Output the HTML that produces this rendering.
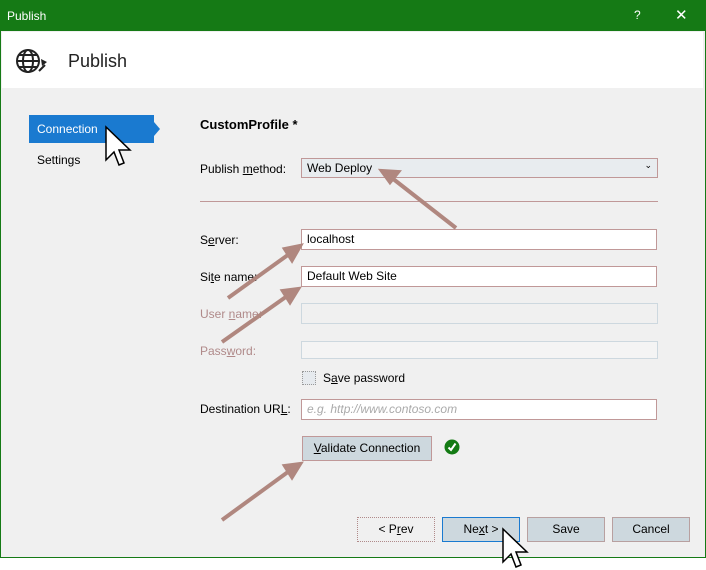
<!DOCTYPE html><html><head><style>
body{margin:0;width:706px;height:570px;background:#fff;font-family:"Liberation Sans",sans-serif;font-size:12px;color:#000;position:relative;overflow:hidden}
.a{position:absolute}
.inp{position:absolute;height:19px;border:1px solid #c09898;background:#fff;box-sizing:border-box;padding:2px 5px;font-size:12px}
.btn{position:absolute;height:25px;box-sizing:border-box;text-align:center;line-height:23px;font-size:12px}
</style></head><body>
<div class="a" style="left:0;top:0;width:706px;height:558px;background:#f0f0f0;border:1px solid #157a15;box-sizing:border-box"></div>
<div class="a" style="left:0;top:0;width:706px;height:31px;background:#157a15;color:#fff;font-size:12px"><span class="a" style="left:7px;top:9px">Publish</span><span class="a" style="left:634px;top:8px">?</span><span class="a" style="left:675px;top:6px;font-size:15px;font-weight:lighter">✕</span></div>
<div class="a" style="left:2px;top:32px;width:701px;height:56px;background:#fff"></div>
<svg class="a" style="left:14px;top:45px" width="34" height="32" viewBox="0 0 34 32"><g fill="none" stroke="#222" stroke-width="2"><circle cx="14" cy="16" r="11"/><ellipse cx="14" cy="16" rx="5" ry="11"/><line x1="3" y1="16" x2="25" y2="16"/><line x1="5" y1="10" x2="23" y2="10"/><line x1="5" y1="22" x2="23" y2="22"/><path d="M25 26 L31 20" /></g><path d="M27 14 L33 17 L28 21Z" fill="#222"/></svg>
<div class="a" style="left:68px;top:51px;font-size:18px;color:#222">Publish</div>
<div class="a" style="left:29px;top:115px;width:125px;height:28px;background:#1a7ad0;color:#fff"><span class="a" style="left:8px;top:7px">Connection</span></div>
<div class="a" style="left:154px;top:122px;width:0;height:0;border-top:7px solid transparent;border-bottom:7px solid transparent;border-left:6px solid #1a7ad0"></div>
<div class="a" style="left:37px;top:153px">Settings</div>
<div class="a" style="left:200px;top:117px;font-weight:bold;font-size:13px">CustomProfile *</div>
<div class="a" style="left:200px;top:162px">Publish <u>m</u>ethod:</div>
<div class="inp" style="left:301px;top:158px;width:357px;height:20px;background:#e8ecef">Web Deploy<span style="position:absolute;right:5px;top:1px;font-size:9px">⌄</span></div>
<div class="a" style="left:200px;top:201px;width:458px;height:1px;background:#c09898"></div>
<div class="a" style="left:200px;top:233px">S<u>e</u>rver:</div>
<div class="inp" style="left:301px;top:229px;width:356px;height:21px">localhost</div>
<div class="a" style="left:200px;top:270px">Si<u>t</u>e name:</div>
<div class="inp" style="left:301px;top:266px;width:356px;height:21px">Default Web Site</div>
<div class="a" style="left:200px;top:307px;color:#b08a8a">User <u>n</u>ame:</div>
<div class="inp" style="left:301px;top:303px;width:357px;height:21px;border-color:#cdd8df;background:#f0f0f0"></div>
<div class="a" style="left:200px;top:344px;color:#b08a8a">Pass<u>w</u>ord:</div>
<div class="inp" style="left:301px;top:341px;width:357px;height:18px;border-color:#cdd8df;background:#f4f4f4"></div>
<div class="a" style="left:302px;top:371px;width:12px;height:12px;border:1px dotted #999;background:#e6eaee"></div>
<div class="a" style="left:323px;top:371px">S<u>a</u>ve password</div>
<div class="a" style="left:200px;top:402px">Destination UR<u>L</u>:</div>
<div class="inp" style="left:301px;top:399px;width:356px;height:21px;color:#aaa;font-style:italic">e.g. http://www.contoso.com</div>
<div class="btn" style="left:302px;top:436px;width:130px;background:#cdd8de;border:1px solid #c09898"><u>V</u>alidate Connection</div>
<svg class="a" style="left:444px;top:439px" width="16" height="16"><circle cx="8" cy="8" r="7.5" fill="#137a13"/><path d="M4.5 8.5 L7 11 L11.5 4.5" stroke="#fff" stroke-width="2" fill="none"/></svg>
<div class="btn" style="left:357px;top:517px;width:78px;background:#f0f0f0;border:1px dotted #b08a8a">&lt; P<u>r</u>ev</div>
<div class="btn" style="left:442px;top:517px;width:78px;background:#cdd8de;border:1px solid #1a7ad0">Ne<u>x</u>t &gt;</div>
<div class="btn" style="left:527px;top:517px;width:78px;background:#cdd8de;border:1px solid #b8a0a0">Save</div>
<div class="btn" style="left:612px;top:517px;width:78px;background:#cdd8de;border:1px solid #b8a0a0">Cancel</div>
<svg class="a" style="left:0;top:0" width="706" height="570"><g stroke="#b0877f" stroke-width="4" fill="#b0877f">
<line x1="456" y1="228" x2="392" y2="178"/><path d="M382 171 L398 172 L390 182Z"/>
<line x1="228" y1="298" x2="292" y2="252"/><path d="M300 246 L292 260 L285 249Z"/>
<line x1="222" y1="342" x2="290" y2="294"/><path d="M298 289 L290 302 L283 291Z"/>
<line x1="222" y1="520" x2="292" y2="469"/><path d="M300 464 L292 477 L285 466Z"/></g>
<g fill="#fff" stroke="#000" stroke-width="1.5"><path d="M106 127 L106 160 L114 152 L119 165 L124 163 L119 150 L130 150Z"/><path d="M503 529 L503 562 L511 554 L516 567 L521 565 L516 552 L527 552Z"/></g></svg>
</body></html>
